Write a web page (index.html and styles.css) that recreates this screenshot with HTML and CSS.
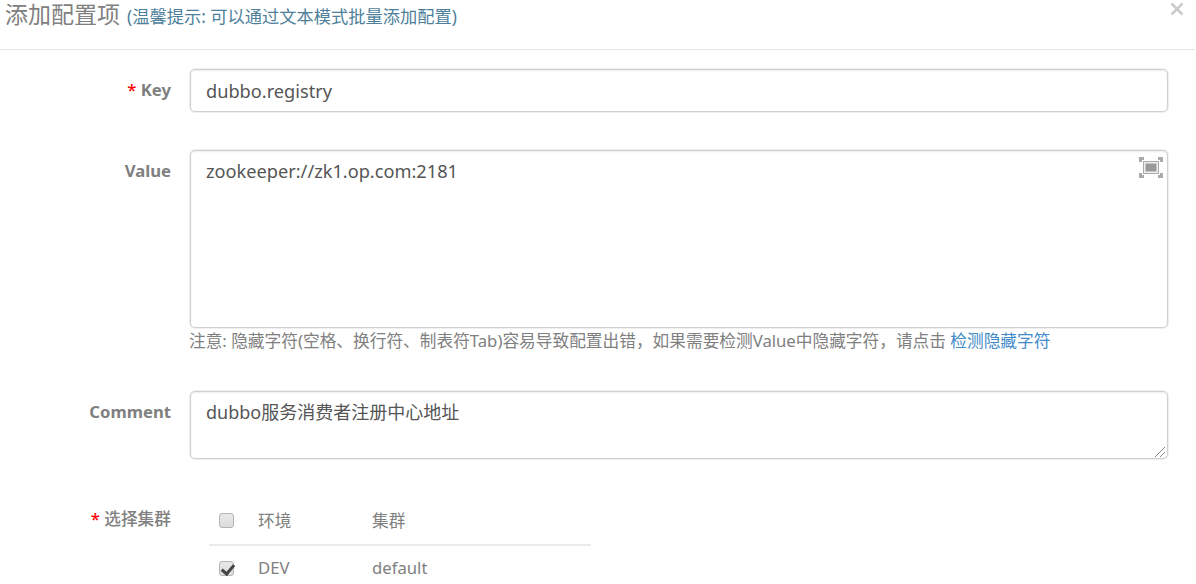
FILE: index.html
```html
<!DOCTYPE html>
<html lang="zh-CN">
<head>
  <meta charset="UTF-8" />
  <meta name="viewport" content="width=device-width, initial-scale=1.0" />
  <title>添加配置项</title>
  <link rel="stylesheet" href="styles.css">
</head>
<body>
  <div class="modal-header">
    <h4 class="modal-title">添加配置项 <small>(温馨提示: 可以通过文本模式批量添加配置)</small></h4>
    <button type="button" class="close" aria-label="Close">
      <svg width="14" height="14" viewBox="0 0 14 14"><path d="M1.5 1.5L12.5 12.5M12.5 1.5L1.5 12.5" /></svg>
    </button>
  </div>

  <form class="modal-body">
    <div class="form-group key-group">
      <label class="control-label" for="key"><span class="required">*</span> Key</label>
      <input id="key" class="form-control" type="text" value="dubbo.registry">
    </div>

    <div class="form-group value-group">
      <label class="control-label" for="value">Value</label>
      <div class="field">
        <div class="text-box">
          <textarea id="value" class="form-control" spellcheck="false">zookeeper://zk1.op.com:2181</textarea>
          <svg class="fullscreen" width="24" height="21" viewBox="0 0 24 21">
            <path class="corner" d="M1.5 5V1.5H5M19 1.5H22.5V5M22.5 16V19.5H19M5 19.5H1.5V16" />
            <rect class="frame" x="4.5" y="4.5" width="15" height="12" />
            <rect class="screen" x="6.5" y="6.5" width="11" height="8" />
          </svg>
        </div>
        <div class="hint">注意: 隐藏字符(空格、换行符、制表符Tab)容易导致配置出错，如果需要检测Value中隐藏字符，请点击 <a href="#">检测隐藏字符</a></div>
      </div>
    </div>

    <div class="form-group comment-group">
      <label class="control-label" for="comment">Comment</label>
      <div class="text-box">
        <textarea id="comment" class="form-control" spellcheck="false">dubbo服务消费者注册中心地址</textarea>
        <svg class="grip" width="12" height="12" viewBox="0 0 12 12"><path d="M1 11L11 1M6 11L11 6" /></svg>
      </div>
    </div>

    <div class="form-group cluster-group">
      <label class="control-label"><span class="required">*</span> 选择集群</label>
      <table class="cluster-table">
        <thead>
          <tr>
            <td class="check"><input type="checkbox"></td>
            <td class="env">环境</td>
            <td>集群</td>
          </tr>
        </thead>
        <tbody>
          <tr>
            <td class="check"><input type="checkbox" checked></td>
            <td class="env">DEV</td>
            <td>default</td>
          </tr>
        </tbody>
      </table>
    </div>
  </form>
</body>
</html>
```
FILE: styles.css
```css
* {
  box-sizing: border-box;
}

body {
  margin: 0;
  height: 584px;
  overflow: hidden;
  background: #fff;
  color: #808080;
  font-family: "Noto Sans", "Noto Sans CJK SC", sans-serif;
  font-size: 16.7px;
}

.modal-header {
  display: flex;
  justify-content: space-between;
  align-items: flex-start;
  width: 1195px;
  height: 50px;
  padding: 0 11px 0 5px;
  border-bottom: 1px solid #e5e5e5;
}

.modal-title {
  margin: 0;
  font-size: 23px;
  font-weight: 400;
  line-height: 28px;
  white-space: nowrap;
}

.modal-title small {
  margin-left: 1px;
  color: #4d7f9b;
  font-size: 17.25px;
  font-weight: 400;
}

.close {
  height: 14px;
  margin-top: 2px;
  padding: 0;
  border: 0;
  background: none;
}

.close svg {
  display: block;
  fill: none;
  stroke: #ccc;
  stroke-width: 2.6;
}

.modal-body {
  padding-top: 19px;
}

.form-group {
  display: flex;
  align-items: flex-start;
}

.control-label {
  flex: none;
  width: 171px;
  margin-right: 19px;
  padding-top: 9px;
  font-weight: 700;
  line-height: 24px;
  text-align: right;
}

.required {
  color: #f00;
  font-weight: 500;
}

.form-control {
  display: block;
  width: 978px;
  margin: 0;
  padding: 6px 15px;
  border: 1px solid #d0d0d0;
  border-radius: 5px;
  outline: none;
  box-shadow: 0 0 0 1px #f0f0f0, inset 0 1px 2px rgba(0, 0, 0, 0.07);
  color: #555;
  font-family: inherit;
  font-size: 18.2px;
  line-height: 28px;
}

.key-group {
  height: 81px;
}

.key-group .form-control {
  height: 43px;
}

.text-box {
  position: relative;
}

.value-group {
  height: 241px;
}

.value-group .form-control {
  height: 178px;
  resize: none;
}

.fullscreen {
  position: absolute;
  top: 7px;
  right: 5px;
}

.fullscreen .corner {
  fill: none;
  stroke: #aaa;
  stroke-width: 3;
}

.fullscreen .frame {
  fill: #eee;
  stroke: #aaa;
}

.fullscreen .screen {
  fill: #999;
}

.hint {
  margin-left: -1px;
  line-height: 26px;
  white-space: nowrap;
}

.hint a {
  color: #428bca;
  text-decoration: none;
}

.comment-group {
  height: 107px;
}

.comment-group .form-control {
  height: 68px;
  font-size: 18px;
  resize: none;
}

.grip {
  position: absolute;
  right: 2px;
  bottom: 1px;
  fill: none;
  stroke: #888;
}

.cluster-group .control-label {
  font-weight: 500;
}

.cluster-table {
  width: 382px;
  margin-left: 19px;
  border-collapse: collapse;
  table-layout: fixed;
}

.cluster-table td {
  height: 46px;
  padding: 0;
  line-height: 24px;
}

.cluster-table thead td {
  height: 47px;
  padding-bottom: 1px;
  border-bottom: 2px solid #ebebeb;
}

.cluster-table .check {
  width: 49px;
  padding-left: 10px;
}

.cluster-table .env {
  width: 114px;
}

.cluster-table input {
  display: block;
  appearance: none;
  width: 15px;
  height: 15px;
  margin: 0;
  border: 1px solid #b5b5b5;
  border-radius: 3px;
  background: linear-gradient(#e8e8e8, #dcdcdc);
}

.cluster-table tbody td {
  padding-bottom: 1px;
}

.cluster-table input:checked::before {
  content: "";
  display: block;
  width: 5px;
  height: 10px;
  margin: 0 0 0 4px;
  border: solid #444;
  border-width: 0 3px 3px 0;
  transform: rotate(40deg);
}
```
